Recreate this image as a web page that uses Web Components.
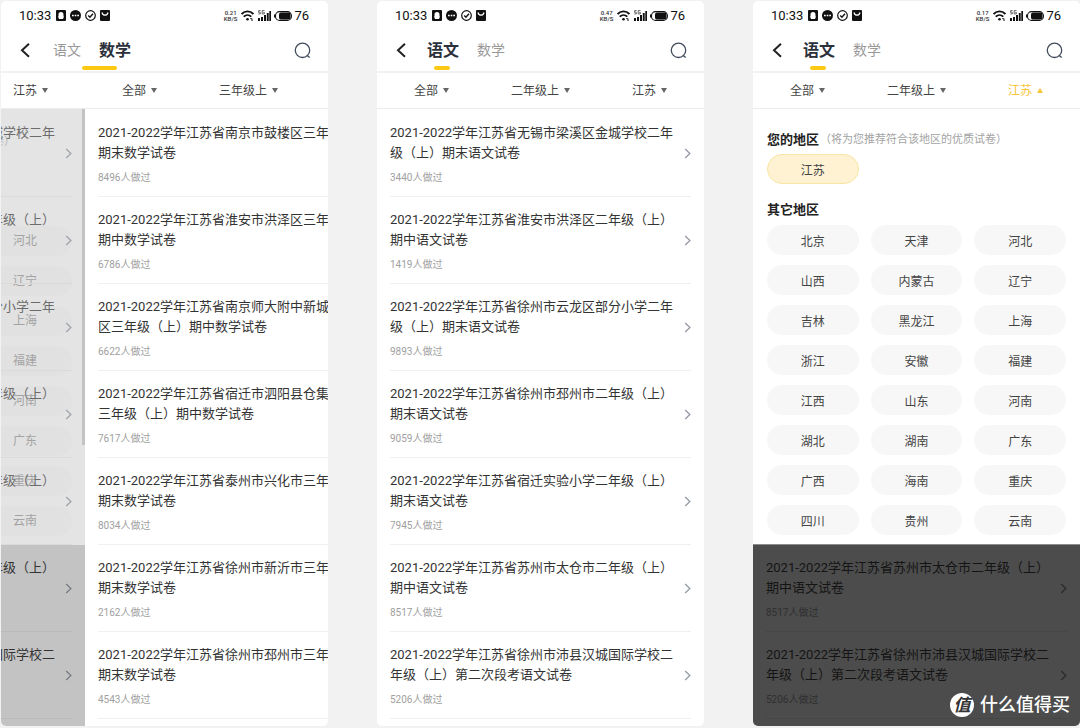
<!DOCTYPE html>
<html lang="zh-CN">
<head>
<meta charset="utf-8">
<meta name="viewport" content="width=device-width, initial-scale=1">
<title>试卷列表</title>
<style>
  html, body { margin: 0; background: #f2f2f2; }
  body { font-family: Roboto, "Noto Sans CJK SC", sans-serif; color: #333; }
</style>
</head>
<body>
<phone-board>
  <phone-screen>
    <status-bar slot="top" speed="0.21"></status-bar>
    <subject-nav slot="top" active="1" sliding></subject-nav>
    <slide-pager>
      <filter-bar slot="leaving" leaving><filter-button>江苏</filter-button></filter-bar>
      <exam-item slot="leaving" tail veiled>城学校二年</exam-item>
      <exam-item slot="leaving" tail veiled>年级（上）</exam-item>
      <exam-item slot="leaving" tail veiled>分小学二年</exam-item>
      <exam-item slot="leaving" tail veiled>年级（上）</exam-item>
      <exam-item slot="leaving" tail veiled>年级（上）</exam-item>
      <exam-item slot="leaving" tail>年级（上）</exam-item>
      <exam-item slot="leaving" tail>国际学校二</exam-item>
      <filter-bar slot="entering" entering><filter-button>全部</filter-button><filter-button>三年级上</filter-button></filter-bar>
      <exam-item slot="entering" cut count="8496">2021-2022学年江苏省南京市鼓楼区三年<br>期末数学试卷</exam-item>
      <exam-item slot="entering" cut count="6786">2021-2022学年江苏省淮安市洪泽区三年<br>期中数学试卷</exam-item>
      <exam-item slot="entering" cut count="6622">2021-2022学年江苏省南京师大附中新城<br>区三年级（上）期中数学试卷</exam-item>
      <exam-item slot="entering" cut count="7617">2021-2022学年江苏省宿迁市泗阳县仓集<br>三年级（上）期中数学试卷</exam-item>
      <exam-item slot="entering" cut count="8034">2021-2022学年江苏省泰州市兴化市三年<br>期末数学试卷</exam-item>
      <exam-item slot="entering" cut count="2162">2021-2022学年江苏省徐州市新沂市三年<br>期末数学试卷</exam-item>
      <exam-item slot="entering" cut count="4543">2021-2022学年江苏省徐州市邳州市三年<br>期末数学试卷</exam-item>
    </slide-pager>
  </phone-screen>

  <phone-screen>
    <status-bar slot="top" speed="0.47"></status-bar>
    <subject-nav slot="top" active="0"></subject-nav>
    <filter-bar><filter-button>全部</filter-button><filter-button>二年级上</filter-button><filter-button>江苏</filter-button></filter-bar>
    <exam-list>
      <exam-item count="3440">2021-2022学年江苏省无锡市梁溪区金城学校二年级（上）期末语文试卷</exam-item>
      <exam-item count="1419">2021-2022学年江苏省淮安市洪泽区二年级（上）期中语文试卷</exam-item>
      <exam-item count="9893">2021-2022学年江苏省徐州市云龙区部分小学二年级（上）期末语文试卷</exam-item>
      <exam-item count="9059">2021-2022学年江苏省徐州市邳州市二年级（上）期末语文试卷</exam-item>
      <exam-item count="7945">2021-2022学年江苏省宿迁实验小学二年级（上）期末语文试卷</exam-item>
      <exam-item count="8517">2021-2022学年江苏省苏州市太仓市二年级（上）期中语文试卷</exam-item>
      <exam-item count="5206">2021-2022学年江苏省徐州市沛县汉城国际学校二年级（上）第二次段考语文试卷</exam-item>
    </exam-list>
  </phone-screen>

  <phone-screen>
    <status-bar slot="top" speed="0.17"></status-bar>
    <subject-nav slot="top" active="0"></subject-nav>
    <filter-bar><filter-button>全部</filter-button><filter-button>二年级上</filter-button><filter-button open>江苏</filter-button></filter-bar>
    <region-sheet current="江苏" regions="北京 天津 河北 山西 内蒙古 辽宁 吉林 黑龙江 上海 浙江 安徽 福建 江西 山东 河南 湖北 湖南 广东 广西 海南 重庆 四川 贵州 云南"></region-sheet>
    <exam-list dimmed>
      <exam-item count="8517">2021-2022学年江苏省苏州市太仓市二年级（上）期中语文试卷</exam-item>
      <exam-item count="5206">2021-2022学年江苏省徐州市沛县汉城国际学校二年级（上）第二次段考语文试卷</exam-item>
    </exam-list>
    <brand-mark></brand-mark>
  </phone-screen>
</phone-board>

<script>
const define = (name, render) => customElements.define(name, class extends HTMLElement {
  connectedCallback() {
    if (!this.shadowRoot) this.attachShadow({ mode: 'open' }).innerHTML = render(this);
  }
});
const buttonReset = `button { appearance: none; border: 0; margin: 0; padding: 0; background: none; font: inherit; color: inherit; cursor: pointer; }`;

define('phone-board', () => `
  <style>
    :host { display: grid; grid-template-columns: repeat(3, minmax(0, 1fr)); gap: 49px; padding: 1px 0 1px 1px; }
  </style><slot></slot>`);

define('phone-screen', () => `
  <style>
    :host { display: flex; flex-direction: column; position: relative; background: #fff; border-radius: 5px; overflow: hidden; }
    main { flex: 1; display: flex; flex-direction: column; }
  </style>
  <header><slot name="top"></slot></header>
  <main><slot></slot></main>`);

define('status-bar', el => `
  <style>
    :host { display: flex; align-items: center; justify-content: space-between; height: 29px; padding: 0 19px 0 18px; color: #111; font-size: 13px; line-height: 16px; }
    div { display: flex; align-items: center; }
    .left { gap: 4px; } .left span { margin-right: 1px; }
    .right { gap: 2px; }
    .speed { display: block; margin-right: 2px; font: 500 6px/6px Roboto, sans-serif; text-align: center; color: #333; }
    .wifi { margin-right: 2px; }
    .signal { margin-right: 1px; }
    svg { display: block; }
  </style>
  <div class="left">
    <span>10:33</span>
    <svg width="10" height="11" viewBox="0 0 10 11"><rect width="10" height="11" rx="1" fill="#111"/><path d="M5 2a2.500 2.500 0 0 0-2.500 2.500v1.600L1.800 7.600h1V9h4.400V7.600h1l-.7-1.500V4.500A2.500 2.500 0 0 0 5 2z" fill="#fff"/></svg>
    <svg width="11" height="11" viewBox="0 0 11 11"><circle cx="5.500" cy="5.500" r="5.500" fill="#111"/><path d="M2 4.800h1.700v1.500H2zM4.700 4.800h1.700v1.500H4.700zM7.300 4.800H9v1.500H7.300z" fill="#fff"/></svg>
    <svg width="11" height="11" viewBox="0 0 11 11" fill="none" stroke="#111" stroke-width="1.200"><circle cx="5.500" cy="5.500" r="4.800"/><path d="M3.200 5.600 4.900 7.200 8 3.800" stroke-width="1.400"/></svg>
    <svg width="10" height="11" viewBox="0 0 10 11"><rect width="10" height="11" rx="1" fill="#111"/><path d="M2 2.500C2.500 4.500 3.700 5.200 5 5.200S7.500 4.500 8 2.500" stroke="#fff" stroke-width="1.200" fill="none"/></svg>
  </div>
  <div class="right">
    <span class="speed">${el.getAttribute('speed')}<br>KB/S</span>
    <svg class="wifi" width="13" height="11" viewBox="0 0 13 11" fill="none" stroke="#111" stroke-width="1.800"><path d="M.6 4C4 .6 9 .6 12.400 4M2.700 6.700c2.200-2.100 5.400-2.100 7.600 0"/><circle cx="6.500" cy="9.200" r="1.300" fill="#111" stroke="none"/><path d="M9.300 8.600h1.400M11 8.600v2.400" stroke-width="1"/></svg>
    <svg class="signal" width="13" height="11" viewBox="0 0 13 11" fill="#111"><path d="M0 8h2v3H0zM3 7h2v4H3zM6 5h2v6H6zM8.800 3h1.900v8H8.800zM11.300 1h1.700v10h-1.700z"/><path d="M2.600.6H.6v1.700h1.700v1.600H.3M6.500.6H4.200v3.300h2.200V2.400H5.300" fill="none" stroke="#444" stroke-width=".8"/></svg>
    <svg width="18" height="10" viewBox="0 0 18 10"><rect x="1.500" y=".6" width="15.900" height="8.800" rx="4" fill="none" stroke="#111" stroke-width="1.100"/><rect x="5" y="1.600" width="11.500" height="6.800" rx="2" fill="#111"/><path d="M.5 3.500v3" stroke="#111" stroke-width="1"/></svg>
    <span>76</span>
  </div>`);

define('subject-nav', el => {
  const active = +el.getAttribute('active');
  return `
  <style>
    ${buttonReset}
    :host { display: flex; align-items: flex-start; height: 41px; padding: 0 17px 0 19px; border-bottom: 2px solid #f2f2f2; }
    .back, .search { display: grid; place-items: center start; height: 40px; }
    .back { width: 23px; } .search { margin-left: auto; }
    .tabs { position: relative; display: flex; }
    .tabs button { width: 48px; height: 40px; padding-bottom: 2px; font-size: 14px; color: #999; }
    .tabs button[aria-selected=true] { font-size: 16px; font-weight: 700; color: #2b303b; }
    /* The marker floats below the tabs and stretches while a page slides in. */
    .tabs::after { content: ""; position: absolute; left: 15px; bottom: 0; width: 16px; height: 4px; border-radius: 2px; background: #fbc911; }
    :host([sliding]) .tabs::after { left: 39px; width: 35px; }
  </style>
  <button class="back" aria-label="返回"><svg width="12" height="16" viewBox="0 0 12 16" fill="none" stroke="#222" stroke-width="2"><path d="M9 1.800 2 8.300l7 6.500"/></svg></button>
  <div class="tabs" role="tablist">${['语文', '数学'].map((t, i) => `<button role="tab" aria-selected="${i === active}">${t}</button>`).join('')}</div>
  <button class="search" aria-label="搜索"><svg width="17" height="17" viewBox="0 0 17 17" fill="none" stroke="#414a5a" stroke-width="1.300"><circle cx="8.500" cy="8.300" r="7.200"/><path d="m12.800 13.200 2.900 2.300"/></svg></button>`;
});

define('filter-bar', () => `
  <style>
    :host { display: grid; grid-template-columns: repeat(3, minmax(0, 1fr)); height: 35px; border-bottom: 1px solid #ececec; background: #fff; }
    :host([leaving]) { grid-template-columns: 109px; justify-content: end; }
    :host([entering]) { grid-template-columns: 109px 109px; }
  </style><slot></slot>`);

define('filter-button', el => `
  <style>
    ${buttonReset}
    :host { display: grid; color: #444; }
    :host([open]) { color: #f9c53a; }
    button { display: flex; align-items: center; justify-content: center; gap: 5px; font-size: 12px; line-height: 18px; white-space: nowrap; }
    i { border: 3px solid transparent; border-top: 5px solid #666; border-bottom: 0; }
    :host([open]) i { border-top: 0; border-bottom: 5px solid currentColor; }
  </style><button aria-expanded="${el.hasAttribute('open')}"><slot></slot><i></i></button>`);

define('exam-list', () => `
  <style>
    :host { display: block; padding: 1px 0 7px; }
    :host([dimmed]) { flex: 1; padding-top: 0; background: #4c4c4c; --title: #141414; --meta: #2f2f2f; --rule: #464646; --arrow: #2b2b2b; }
  </style><slot></slot>`);

define('exam-item', el => {
  const count = el.getAttribute('count');
  return `
  <style>
    :host { display: block; padding: 0 13px; }
    a { display: flex; align-items: center; justify-content: space-between; gap: 6px; box-sizing: border-box; height: 87px; border-bottom: 1px solid var(--rule, #f0f0f0); text-decoration: none; color: inherit; }
    .text { flex: 1; min-width: 0; padding-top: 1px; }
    .title { display: block; min-height: 40px; font-size: 13px; line-height: 20px; color: var(--title, #333); }
    .meta { display: block; min-height: 14px; margin-top: 8px; font-size: 10px; line-height: 14px; color: var(--meta, #a0a0a0); }
    svg { display: block; flex: none; }
    :host([cut]) { padding-right: 0; }
    :host([cut]) .title { white-space: nowrap; }
    :host([tail]) { padding-left: 0; --rule: #bababa; --title: #333; --arrow: #777c84; }
    :host([tail]) .text { display: flex; flex-direction: column; align-items: flex-end; }
    :host([tail]) .title { white-space: nowrap; }
    :host([tail]) a { gap: 10px; }
    :host([veiled]) { --rule: #dadada; --title: #6c6c6c; --arrow: #a0a5ab; }
  </style>
  <a href="#"><span class="text"><span class="title"><slot></slot></span><span class="meta">${count ? count + '人做过' : ''}</span></span>
  ${el.hasAttribute('cut') ? '' : '<svg width="7" height="11" viewBox="0 0 7 11" fill="none" stroke="var(--arrow, #949aa3)" stroke-width="1.300"><path d="m1.200 1 4.700 4.500L1.200 10"/></svg>'}</a>`;
});

define('slide-pager', () => `
  <style>
    :host { display: flex; flex: 1; }
    section { position: relative; display: flex; flex-direction: column; overflow: hidden; }
    .leaving { flex: 0 0 84px; background: #c3c3c3; isolation: isolate; }
    .entering { flex: 1; min-width: 0; }
    slot { display: block; padding-bottom: 7px; }
    ::slotted(filter-bar) { margin-bottom: 1px; }
    /* The region sheet is fading out behind the leaving list. */
    .ghost { position: absolute; z-index: -1; top: 36px; left: 0; right: 0; height: 436px; box-sizing: border-box; background: #e4e4e4; color: #a3a3a3; overflow: hidden; }
    .ghost p { margin: 24px 70px 75px 0; display: flex; justify-content: flex-end; font-size: 11px; line-height: 18px; white-space: nowrap; color: #b8b8b8; }
    .ghost ul { display: grid; gap: 10px; margin: 0 13px 0 0; padding: 0; list-style: none; font-size: 12px; line-height: 30px; }
    .ghost li { padding-left: 12px; border-radius: 0 15px 15px 0; background: #e1e1e1; }
    .bar { position: absolute; top: 36px; right: 0; width: 3px; height: 336px; background: #c3c3c3; }
  </style>
  <section class="leaving">
    <slot name="leaving"></slot>
    <div class="ghost"><p>卷）</p><ul>${'河北 辽宁 上海 福建 河南 广东 重庆 云南'.split(' ').map(t => `<li>${t}</li>`).join('')}</ul></div>
    <div class="bar"></div>
  </section>
  <section class="entering"><slot name="entering"></slot></section>`);

define('region-sheet', el => `
  <style>
    ${buttonReset}
    :host { display: block; padding: 21px 14px 9px; border-bottom: 1px solid #8c8c8c; }
    h2 { display: flex; align-items: center; gap: 1px; margin: 0 0 4px; font-size: 13px; line-height: 20px; font-weight: 700; color: #222; white-space: nowrap; }
    small { font-size: 11px; font-weight: 400; color: #a3a3a3; }
    .grid { display: grid; grid-template-columns: repeat(3, minmax(0, 1fr)); gap: 10px 12px; }
    .grid + h2 { margin: 16px 0 5px; }
    .grid button { height: 30px; border-radius: 15px; background: #f7f7f7; font-size: 12px; color: #444; }
    .grid .on { background: #fef2d3; border: 1px solid #f9e5a2; }
  </style>
  <h2>您的地区<small>（将为您推荐符合该地区的优质试卷）</small></h2>
  <div class="grid"><button class="on" aria-pressed="true">${el.getAttribute('current')}</button></div>
  <h2>其它地区</h2>
  <div class="grid">${el.getAttribute('regions').split(' ').map(t => `<button>${t}</button>`).join('')}</div>`);

define('brand-mark', () => `
  <style>
    :host { position: absolute; right: 10px; bottom: 8px; display: flex; align-items: center; gap: 6px; color: #fff; font-size: 18px; line-height: 26px; font-weight: 500; }
    b { display: grid; place-items: center; width: 24px; height: 24px; border-radius: 50%; background: #fff; color: #333; font-size: 17px; line-height: 24px; font-style: italic; }
  </style><b>值</b><span>什么值得买</span>`);
</script>
</body>
</html>
